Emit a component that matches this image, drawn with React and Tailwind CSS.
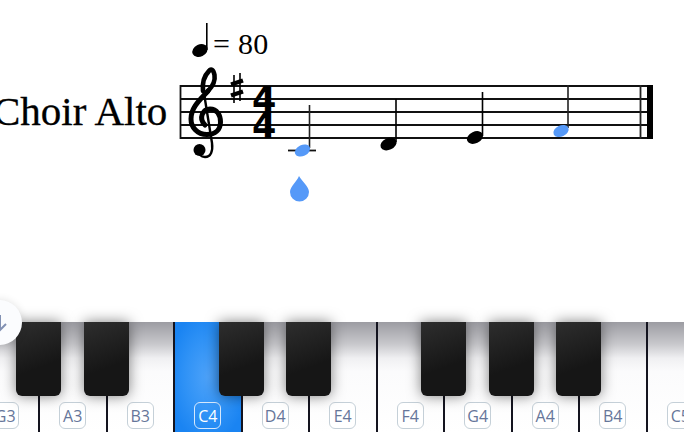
const WHITE_KEYS = ['G3', 'A3', 'B3', 'C4', 'D4', 'E4', 'F4', 'G4', 'A4', 'B4', 'C5'];
const BLACK_KEYS = ['left-[16px]', 'left-[84px]', 'left-[219px]', 'left-[286px]', 'left-[421px]', 'left-[489px]', 'left-[556px]'];
const STAFF_Y = [86, 99, 112, 125, 138];
const BLUE = '#5599f8';

function Score() {
  return (
    <svg width="684" height="322" viewBox="0 0 684 322" className="block">
      <text x="-7" y="125" fontFamily="'Liberation Serif', serif" fontSize="41" fill="#000" stroke="#000" strokeWidth="0.3">Choir Alto</text>

      {/* tempo */}
      <ellipse cx="200" cy="50.500" rx="8" ry="6" transform="rotate(-25 200 50.500)" fill="#000" />
      <line x1="206.800" y1="23" x2="206.800" y2="50" stroke="#000" strokeWidth="1.600" />
      <text x="213" y="54" fontFamily="'Liberation Serif', serif" fontSize="30" fill="#000" letterSpacing="0.3">= 80</text>

      {/* staff */}
      {STAFF_Y.map((y) => (
        <line key={y} x1="180" y1={y} x2="653" y2={y} stroke="#111" strokeWidth="1.800" />
      ))}
      <line x1="180.500" y1="85" x2="180.500" y2="139" stroke="#111" strokeWidth="1.800" />
      <line x1="640.500" y1="85" x2="640.500" y2="139" stroke="#222" strokeWidth="1.800" />
      <rect x="647" y="85" width="6" height="54" fill="#000" />

      {/* clef */}
      <g fill="none" stroke="#000" strokeLinecap="round">
        <path d="M205 125C198 118 203 109 210 109C217 109 220.500 115 220.500 122C220.500 130 215 134.500 207 134.500C197 134.500 191 127 191 119C191 107 201 99 208 91" strokeWidth="5" />
        <path d="M208 91C213 86 215.500 81 214.500 75C213.500 69.500 211 68 209 71C205 75 202 81 203 91" strokeWidth="4.600" />
        <path d="M203 87L212 143C213 151 211 157 205 157C203 157 201 156 200 155" strokeWidth="2.400" />
      </g>
      <circle cx="199.500" cy="150" r="6" fill="#000" />

      {/* key signature */}
      <path d="M234 75v28M240 73v28" stroke="#000" strokeWidth="1.600" />
      <path d="M231 84.500l12-4M231 95.500l12-4" stroke="#000" strokeWidth="4.200" />

      {/* time signature */}
      <text x="252" y="112" fontFamily="'DejaVu Sans', sans-serif" fontWeight="700" fontSize="35" fill="#000">4</text>
      <text x="252" y="138" fontFamily="'DejaVu Sans', sans-serif" fontWeight="700" fontSize="35" fill="#000">4</text>

      {/* notes */}
      <line x1="288" y1="150.500" x2="316" y2="150.500" stroke="#111" strokeWidth="1.800" />
      <line x1="309.500" y1="105" x2="309.500" y2="148" stroke="#222" strokeWidth="1.600" />
      <ellipse cx="302.500" cy="150.500" rx="8" ry="5.500" transform="rotate(-25 302.500 150.500)" fill={BLUE} />

      <line x1="396" y1="99" x2="396" y2="142" stroke="#000" strokeWidth="1.600" />
      <ellipse cx="388.500" cy="144" rx="8.500" ry="5.800" transform="rotate(-25 388.500 144)" fill="#000" />

      <line x1="482.500" y1="92" x2="482.500" y2="136" stroke="#000" strokeWidth="1.600" />
      <ellipse cx="475" cy="137.500" rx="8.500" ry="5.800" transform="rotate(-25 475 137.500)" fill="#000" />

      <line x1="568" y1="85" x2="568" y2="128" stroke="#222" strokeWidth="1.600" />
      <ellipse cx="561" cy="131" rx="8" ry="5.500" transform="rotate(-25 561 131)" fill={BLUE} />

      {/* pitch marker */}
      <path d="M299 176c3 5 10 11 10 16a9.500 9.500 0 0 1-19 0c0-5 7-11 9-16z" fill={BLUE} />
    </svg>
  );
}

function WhiteKey({ note }) {
  const active = note === 'C4';
  return (
    <div
      className={
        active
          ? 'relative h-full w-[67.5px] shrink-0 border-r-2 border-[#14141f] bg-[radial-gradient(ellipse_at_50%_50%,#4da2f9,#2f92f6_50%,#1a84f2_85%)]'
          : 'relative h-full w-[67.5px] shrink-0 border-r-2 border-[#14141f] bg-[linear-gradient(#9c9ca2,#c8c8cc_20%,#f0f0f2_33%,#fbfbfc_45%,#fff)]'
      }
    >
      <div className="absolute bottom-[3px] left-0 right-0 flex justify-center">
        <span
          className={
            active
              ? 'flex h-[27px] w-[27px] items-center justify-center rounded-[6px] border-[1.5px] border-[#d6e8fc] text-[16px] text-white'
              : 'flex h-[27px] w-[27px] items-center justify-center rounded-[6px] border-[1.5px] border-[#c5d0d8] bg-white text-[16px] text-[#66769a]'
          }
        >
          {note}
        </span>
      </div>
    </div>
  );
}

export default function App() {
  return (
    <div className="relative flex h-[432px] w-[684px] flex-col overflow-hidden bg-white font-['Open_Sans',sans-serif]">
      <Score />
      <div className="relative h-[110px]">
        <div className="ml-[-27.5px] flex h-full">
          {WHITE_KEYS.map((note) => (
            <WhiteKey key={note} note={note} />
          ))}
        </div>
        {BLACK_KEYS.map((pos) => (
          <div
            key={pos}
            className={`absolute top-0 h-[74px] w-[45px] rounded-b-[6px] bg-[linear-gradient(160deg,#2e2e2e,#161616_60%)] shadow-[0_0_14px_rgba(0,0,0,0.5)] ${pos}`}
          />
        ))}
      </div>
      <div className="absolute left-[-23px] top-[300px] flex h-[45px] w-[45px] items-center justify-center rounded-full bg-[#fbfcfe] shadow-[0_0_8px_rgba(0,0,0,0.12)]">
        <svg width="16" height="18" viewBox="0 0 16 18" fill="none" stroke="#8291b3" strokeWidth="2">
          <path d="M8 1v14M2 10l6 6 6-6" />
        </svg>
      </div>
    </div>
  );
}
